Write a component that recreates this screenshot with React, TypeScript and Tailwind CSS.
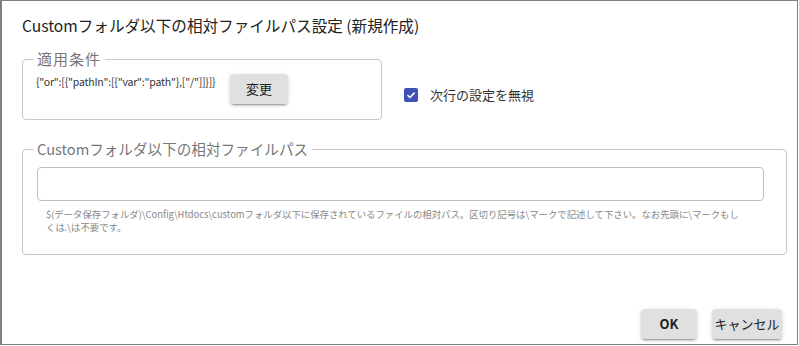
import React from 'react';

const font = { fontFamily: '"Noto Sans CJK JP", "Noto Sans", sans-serif' };

const btn =
  'h-[30px] rounded bg-[#e0e0e0] text-[13px] text-[#222] shadow-[0_3px_1px_-2px_rgba(0,0,0,0.2),0_2px_2px_0_rgba(0,0,0,0.14),0_1px_5px_0_rgba(0,0,0,0.12)]';

const App = () => {
  return (
    <div
      style={font}
      className="w-[798px] h-[345px] bg-white border border-l-2 border-[#808080] flex flex-col"
    >
      <h1 className="pt-[12px] pl-[20px] text-[15.6px] leading-[24px] text-[#222]">
        Customフォルダ以下の相対ファイルパス設定 (新規作成)
      </h1>

      <div className="flex mt-[13px] ml-[20px]">
        <fieldset className="w-[360px] h-[70px] min-w-0 border border-[#c8c8c8] rounded-[4px] m-0 pl-[13px] pr-0 pb-0 pt-[6px]">
          <legend className="-ml-[3px] px-[4px] text-[15px] leading-[18px] tracking-[1px] text-[#777]">適用条件</legend>
          <div className="flex items-start">
            <span className="w-[194px] text-[10.5px] leading-[16px] tracking-[-0.2px] text-[#333] whitespace-nowrap">
              {'{"or":[{"pathIn":[{"var":"path"},["/"]]}]}'}
            </span>
            <button className={`${btn} w-[58px]`}>変更</button>
          </div>
        </fieldset>

        <label className="flex items-center ml-[22px] mt-[37px] self-start">
          <span className="w-[14px] h-[14px] rounded-[2px] bg-[#3f51b5] flex items-center justify-center">
            <svg width="10" height="10" viewBox="0 0 10 10">
              <path d="M1.5 5.2 L4 7.5 L8.6 2.6" fill="none" stroke="white" strokeWidth="1.6" />
            </svg>
          </span>
          <span className="ml-[12px] text-[13px] leading-[16px] text-[#333]">次行の設定を無視</span>
        </label>
      </div>

      <fieldset className="mt-[20px] ml-[20px] w-[765px] h-[115px] min-w-0 border border-[#c8c8c8] rounded-[4px] m-0 pl-[14px] pr-[22px] pb-0 pt-[9px]">
        <legend className="-ml-[4px] px-[4px] text-[14.6px] leading-[18px] text-[#777]">
          Customフォルダ以下の相対ファイルパス
        </legend>
        <input className="block w-[727px] h-[34px] border border-[#bdbdbd] rounded-[4px] outline-none" />
        <p className="mt-[7px] pl-[9px] text-[9.4px] leading-[13px] text-[#888] whitespace-nowrap overflow-hidden">
          $(データ保存フォルダ)\Config\Htdocs\customフォルダ以下に保存されているファイルの相対パス。区切り記号は\マークで記述して下さい。なお先頭に\マークもし
          <br />
          くは.\は不要です。
        </p>
      </fieldset>

      <div className="mt-auto flex justify-end gap-[15px] pr-[15px] pb-[5px]">
        <button className={`${btn} w-[56px] font-bold text-[12px]`}>OK</button>
        <button className={`${btn} w-[70px]`}>キャンセル</button>
      </div>
    </div>
  );
};

export default App;
